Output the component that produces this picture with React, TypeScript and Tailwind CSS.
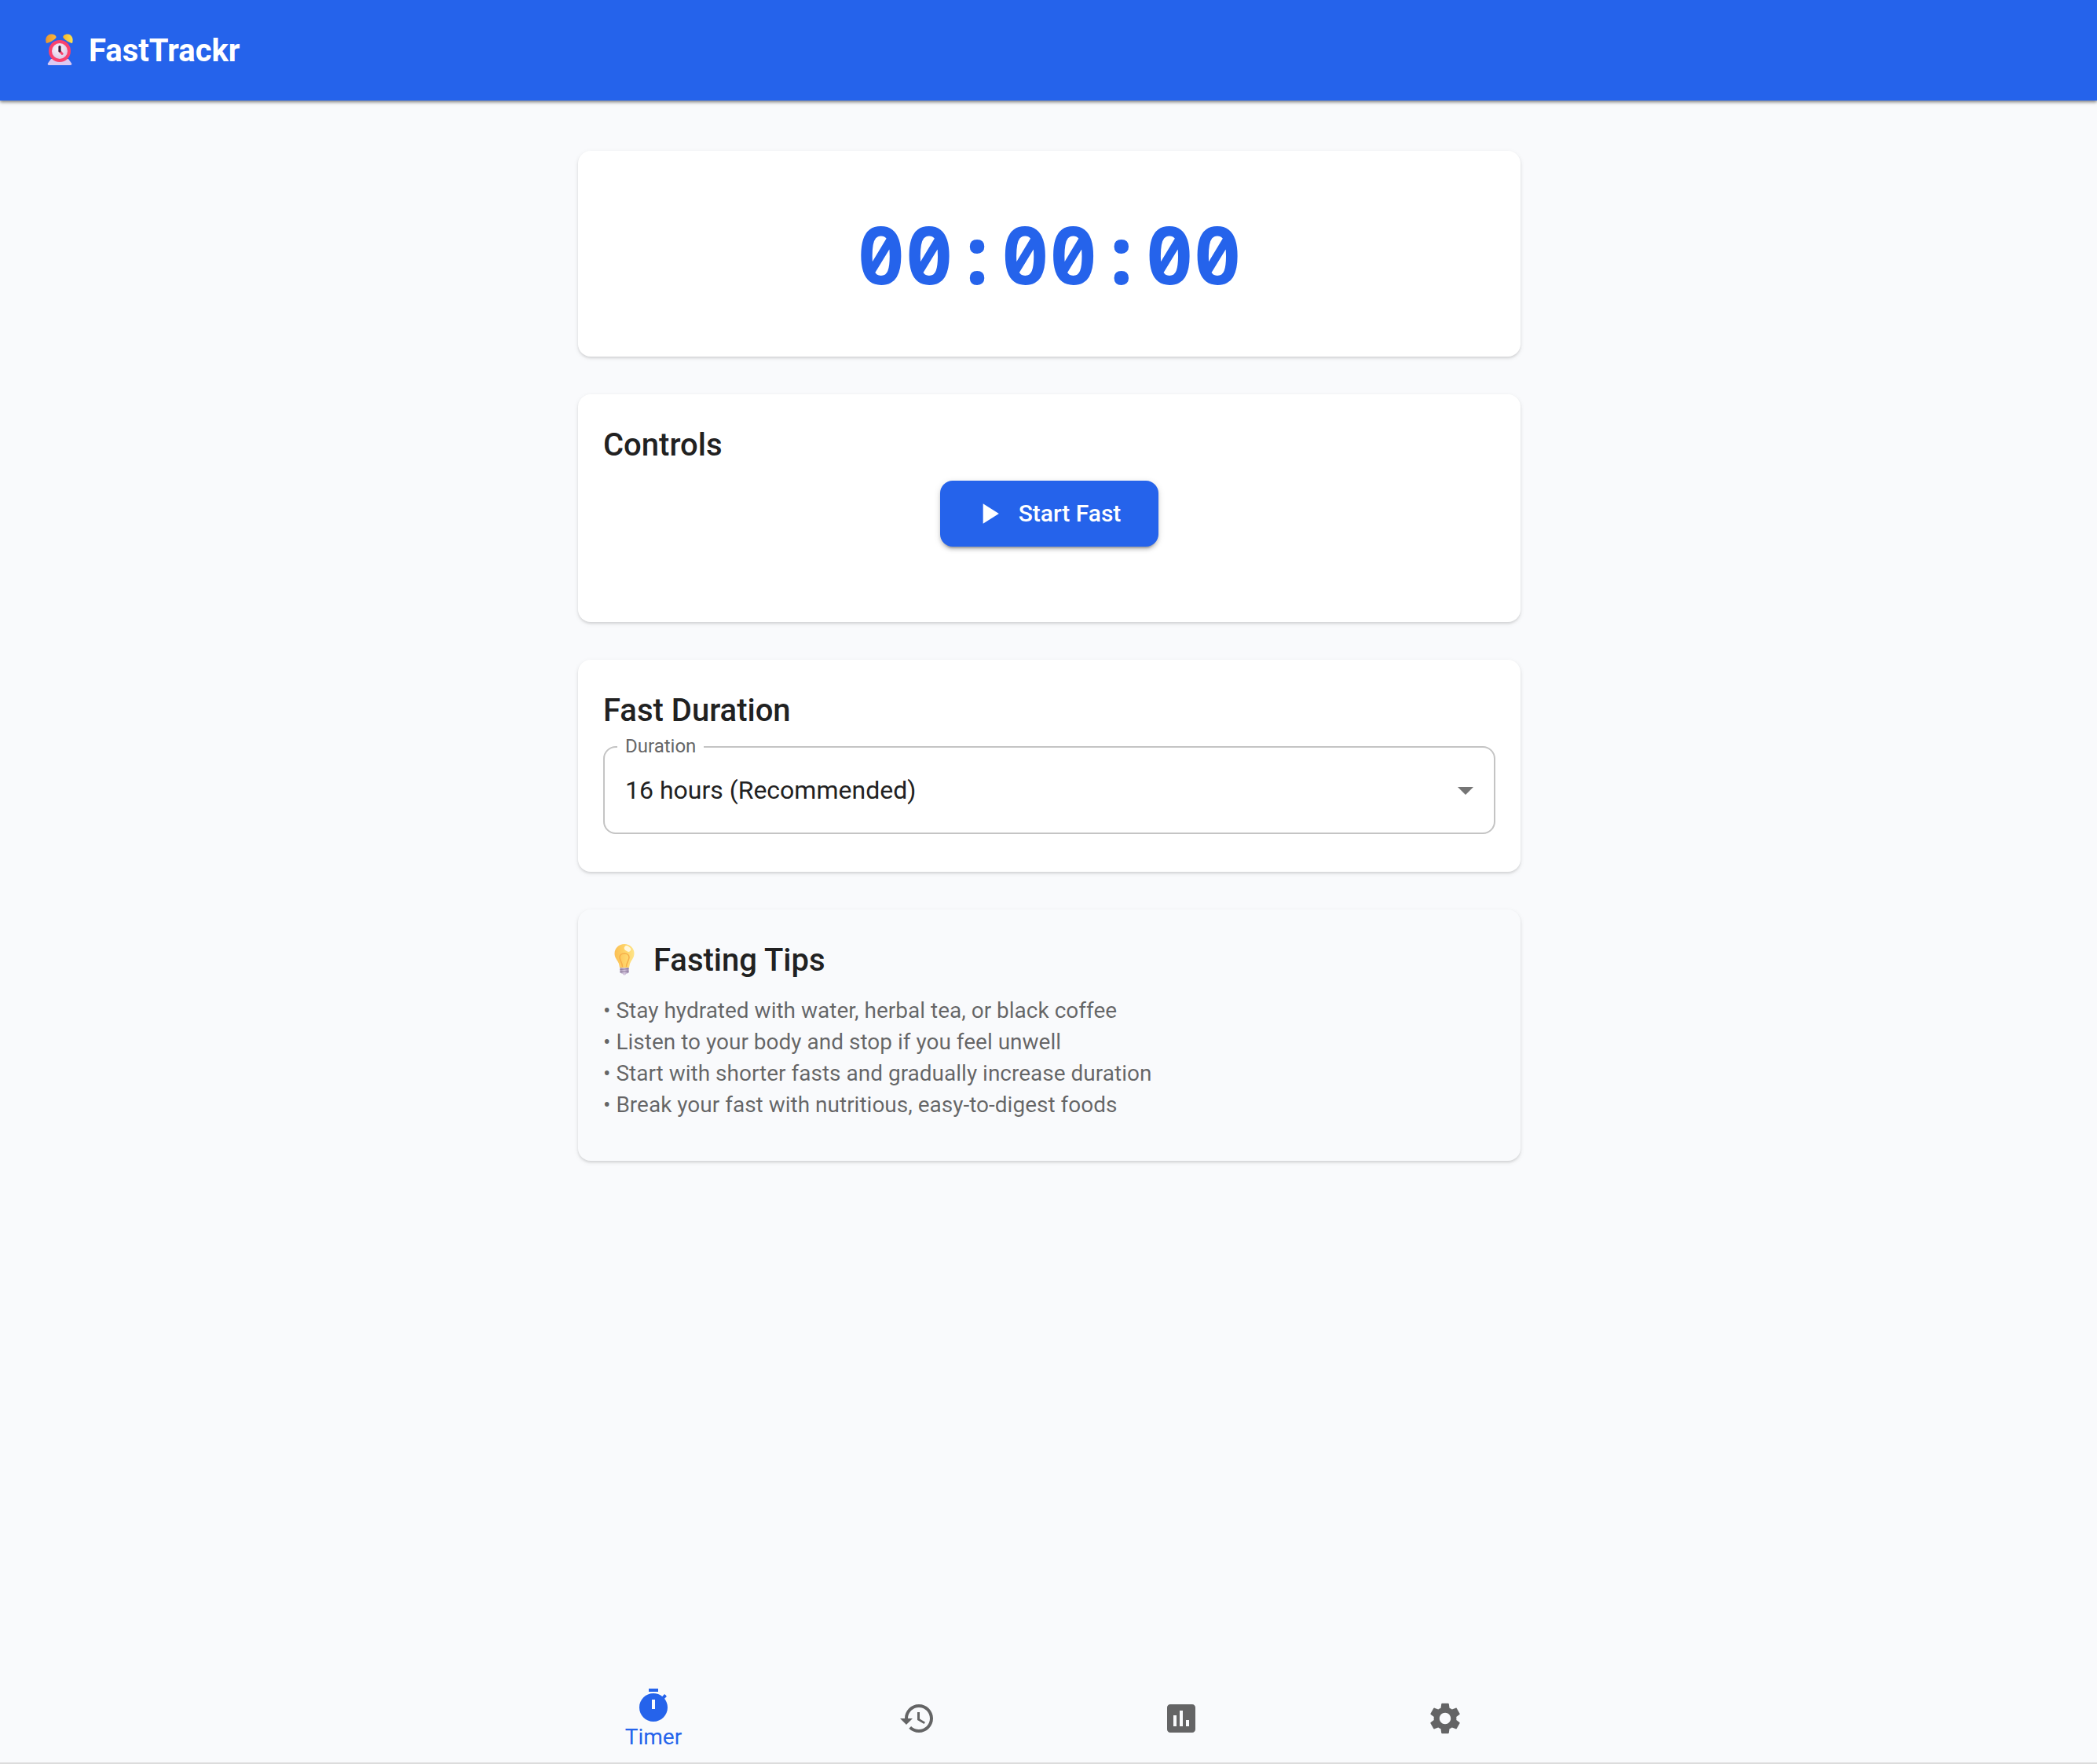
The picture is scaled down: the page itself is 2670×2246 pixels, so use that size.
import { useState, type ReactNode } from "react";

function AlarmClockIcon() {
  return (
    <svg viewBox="0 0 54 48" className="h-12 w-[54px] shrink-0" aria-hidden="true">
      <defs>
        <linearGradient id="bellLeft" x1="0" x2="1">
          <stop offset="0" stopColor="#e8952f" />
          <stop offset="1" stopColor="#fdb93c" />
        </linearGradient>
        <linearGradient id="bellRight" x1="0" x2="1">
          <stop offset="0" stopColor="#f3b52f" />
          <stop offset="1" stopColor="#ffe44d" />
        </linearGradient>
        <radialGradient id="clockFace" cx="0.4" cy="0.35" r="0.7">
          <stop offset="0" stopColor="#fbf5fc" />
          <stop offset="1" stopColor="#dcc6e4" />
        </radialGradient>
      </defs>
      <path d="M17 34h22l4 5.500q1 2.500-1.500 2.500h-27q-2.500 0-1.500-2.500z" fill="#dcc9f2" />
      <path d="M11 14C8.500 7.500 12 3 17 2.500c4-.3 7 2 6.500 4.500C21 10.500 14 13.500 11 14z" fill="url(#bellLeft)" />
      <path d="M44 14C46 7.500 43 3 38.500 2.500c-4-.3-7 2-6 4.500C35 10.500 41 13.500 44 14z" fill="url(#bellRight)" />
      <circle cx="28" cy="24" r="14" fill="#f9416d" />
      <circle cx="28" cy="24" r="10" fill="url(#clockFace)" />
      <path d="M28 24l3.200 3.500" stroke="#f9416d" strokeWidth="3" strokeLinecap="round" />
      <path d="M28 18.500V24" stroke="#35203f" strokeWidth="3.200" strokeLinecap="round" />
    </svg>
  );
}

function LightBulbIcon() {
  return (
    <svg viewBox="0 0 54 48" className="h-12 w-[54px] shrink-0" aria-hidden="true">
      <defs>
        <linearGradient id="bulbGlass" x1="0" x2="1">
          <stop offset="0" stopColor="#fbbf55" />
          <stop offset="0.6" stopColor="#fed66b" />
          <stop offset="1" stopColor="#fee48a" />
        </linearGradient>
        <linearGradient id="bulbBase" x1="0" x2="1">
          <stop offset="0" stopColor="#a08fae" />
          <stop offset="0.5" stopColor="#d9cbe2" />
          <stop offset="1" stopColor="#9a86ab" />
        </linearGradient>
      </defs>
      <path d="M27 3C20 3 14.500 8 14.500 15c0 5 3 8 4.500 11 1.500 2.500 1.500 5 2 7h12c.5-2 .5-4.500 2-7 1.500-3 4.500-6 4.500-11C39.500 8 34 3 27 3z" fill="url(#bulbGlass)" />
      <path d="M24.500 32c0-5-3.500-8.500-3.500-12 0-3 2.500-5 6-5s6 2 6 5c0 3.500-3.500 7-3.500 12" fill="none" stroke="#f6ae49" strokeWidth="1.500" />
      <ellipse cx="31" cy="9" rx="4.500" ry="3.200" fill="#fffbea" opacity="0.9" transform="rotate(35 31 9)" />
      <path d="M21.500 33h11v6.500l-2 1h-1L28 42.500h-2l-1.500-2h-1l-2-1z" fill="url(#bulbBase)" />
      <path d="M21.500 35.500l11-1M21.500 38.500l11-1" stroke="#8d7a9c" strokeWidth="1" />
    </svg>
  );
}

function MaterialIcon({ d, className }: { d: string; className: string }) {
  return (
    <svg viewBox="0 0 24 24" fill="currentColor" className={className} aria-hidden="true">
      <path d={d} />
    </svg>
  );
}

const icons = {
  play: "M8 5v14l11-7z",
  arrow: "M7 10l5 5 5-5z",
  timer:
    "M9 1h6v2H9zm10.030 6.390l1.420-1.420c-.43-.51-.9-.99-1.410-1.410l-1.420 1.420C16.070 4.740 14.120 4 12 4c-4.970 0-9 4.030-9 9s4.020 9 9 9 9-4.030 9-9c0-2.120-.74-4.070-1.970-5.610M13 14h-2V8h2z",
  history:
    "M13 3c-4.970 0-9 4.030-9 9H1l3.890 3.890.07.14L9 12H6c0-3.870 3.130-7 7-7s7 3.130 7 7-3.130 7-7 7c-1.930 0-3.680-.79-4.940-2.060l-1.420 1.420C8.270 19.990 10.510 21 13 21c4.970 0 9-4.030 9-9s-4.030-9-9-9m-1 5v5l4.280 2.540.72-1.210-3.500-2.080V8z",
  stats:
    "M19 3H5c-1.100 0-2 .9-2 2v14c0 1.100.9 2 2 2h14c1.100 0 2-.9 2-2V5c0-1.100-.9-2-2-2M9 17H7v-7h2zm4 0h-2V7h2zm4 0h-2v-4h2z",
  settings:
    "M19.140 12.940c.04-.3.06-.61.06-.94 0-.32-.02-.64-.07-.94l2.030-1.580c.18-.14.23-.41.12-.61l-1.920-3.320c-.12-.22-.37-.29-.59-.22l-2.390.96c-.5-.38-1.030-.7-1.620-.94l-.36-2.540c-.04-.24-.24-.41-.48-.41h-3.840c-.24 0-.43.17-.47.41l-.36 2.540c-.59.24-1.130.57-1.620.94l-2.390-.96c-.22-.08-.47 0-.59.22L2.740 8.870c-.12.21-.08.47.12.61l2.030 1.580c-.05.3-.09.63-.09.94s.02.64.07.94l-2.030 1.580c-.18.14-.23.41-.12.61l1.920 3.320c.12.22.37.29.59.22l2.390-.96c.5.38 1.030.7 1.620.94l.36 2.540c.05.24.24.41.48.41h3.840c.24 0 .44-.17.47-.41l.36-2.540c.59-.24 1.130-.56 1.620-.94l2.390.96c.22.08.47 0 .59-.22l1.920-3.320c.12-.22.07-.47-.12-.61zM12 15.600c-1.980 0-3.600-1.620-3.600-3.600s1.620-3.600 3.600-3.600 3.600 1.620 3.600 3.600-1.620 3.600-3.600 3.600",
};

const cardShadow =
  "shadow-[0_2px_3px_0_rgba(0,0,0,0.1),0_2px_6px_0_rgba(0,0,0,0.08)]";

function Card({ className, children }: { className: string; children: ReactNode }) {
  return <section className={`rounded-2xl ${cardShadow} ${className}`}>{children}</section>;
}

const durations = ["12 hours", "14 hours", "16 hours (Recommended)", "18 hours", "20 hours", "24 hours"];

const tips = [
  "Stay hydrated with water, herbal tea, or black coffee",
  "Listen to your body and stop if you feel unwell",
  "Start with shorter fasts and gradually increase duration",
  "Break your fast with nutritious, easy-to-digest foods",
];

const tabs = [
  { name: "Timer", icon: icons.timer },
  { name: "History", icon: icons.history },
  { name: "Statistics", icon: icons.stats },
  { name: "Settings", icon: icons.settings },
];

export default function App() {
  const [duration, setDuration] = useState(durations[2]);
  const [active, setActive] = useState("Timer");

  return (
    <div className="flex min-h-screen flex-col bg-[#f9fafc] font-['Roboto',sans-serif] text-[#212121]">
      <header className="flex h-32 items-center bg-[#2563eb] px-12 pt-0.5 text-white shadow-[0_2px_4px_rgba(0,0,0,0.5)]">
        <h1 className="flex items-center gap-[11px] text-[40px] leading-[64px] font-bold">
          <AlarmClockIcon />
          FastTrackr
        </h1>
      </header>

      <main className="mx-auto flex w-full max-w-[1202px] grow flex-col gap-12 pt-16 pb-12 pl-0.5">
        <Card className="bg-white px-8 py-16 text-center">
          <div
            role="timer"
            className="font-['Noto_Sans_Mono','Roboto_Mono','DejaVu_Sans_Mono',monospace] text-[102px] leading-[134px] font-bold text-[#2563eb] slashed-zero"
          >
            00:00:00
          </div>
        </Card>

        <Card className="bg-white px-8 pt-8 pb-24">
          <h2 className="mb-3 text-[40px] leading-[66px] font-medium">Controls</h2>
          <div className="flex justify-center">
            <button
              type="button"
              className="flex items-center gap-4 rounded-2xl bg-[#2563eb] py-4 pr-12 pl-10 text-[30px] leading-[52px] font-medium text-white shadow-[0_6px_2px_-4px_rgba(0,0,0,0.2),0_4px_4px_0_rgba(0,0,0,0.14),0_2px_10px_0_rgba(0,0,0,0.12)]"
            >
              <MaterialIcon d={icons.play} className="size-11" />
              Start Fast
            </button>
          </div>
        </Card>

        <Card className="bg-white px-8 pt-8 pb-12">
          <h2 className="mb-3 text-[40px] leading-[66px] font-medium">Fast Duration</h2>
          <div className="relative">
            <label
              htmlFor="duration"
              className="absolute -top-3 left-[18px] bg-white px-2.5 text-2xl leading-6 text-[#666666]"
            >
              Duration
            </label>
            <select
              id="duration"
              value={duration}
              onChange={(e) => setDuration(e.target.value)}
              className="h-28 w-full appearance-none rounded-2xl border-2 border-[#c4c4c4] bg-transparent px-[26px] text-[32px] leading-[46px]"
            >
              {durations.map((d) => (
                <option key={d}>{d}</option>
              ))}
            </select>
            <MaterialIcon
              d={icons.arrow}
              className="pointer-events-none absolute top-8 right-3.5 size-12 text-[#757575]"
            />
          </div>
        </Card>

        <Card className="bg-[#f9fafc] px-8 pt-8 pb-[51px]">
          <h2 className="mb-[11px] flex items-center gap-2.5 text-[40px] leading-[66px] font-medium">
            <LightBulbIcon />
            Fasting Tips
          </h2>
          <ul className="text-[28px] leading-10 text-black/60">
            {tips.map((tip) => (
              <li key={tip}>• {tip}</li>
            ))}
          </ul>
        </Card>
      </main>

      <nav className="flex justify-center border-b-2 border-[#dcdcdc] pl-0.5">
        {tabs.map((tab) => (
          <button
            key={tab.name}
            type="button"
            aria-label={tab.name}
            onClick={() => setActive(tab.name)}
            className={`flex h-28 w-full max-w-[336px] flex-col items-center justify-center text-[28px] leading-8 ${
              active === tab.name ? "text-[#2563eb]" : "text-black/60"
            }`}
          >
            <MaterialIcon d={tab.icon} className="size-12" />
            {active === tab.name && <span>{tab.name}</span>}
          </button>
        ))}
      </nav>
    </div>
  );
}
